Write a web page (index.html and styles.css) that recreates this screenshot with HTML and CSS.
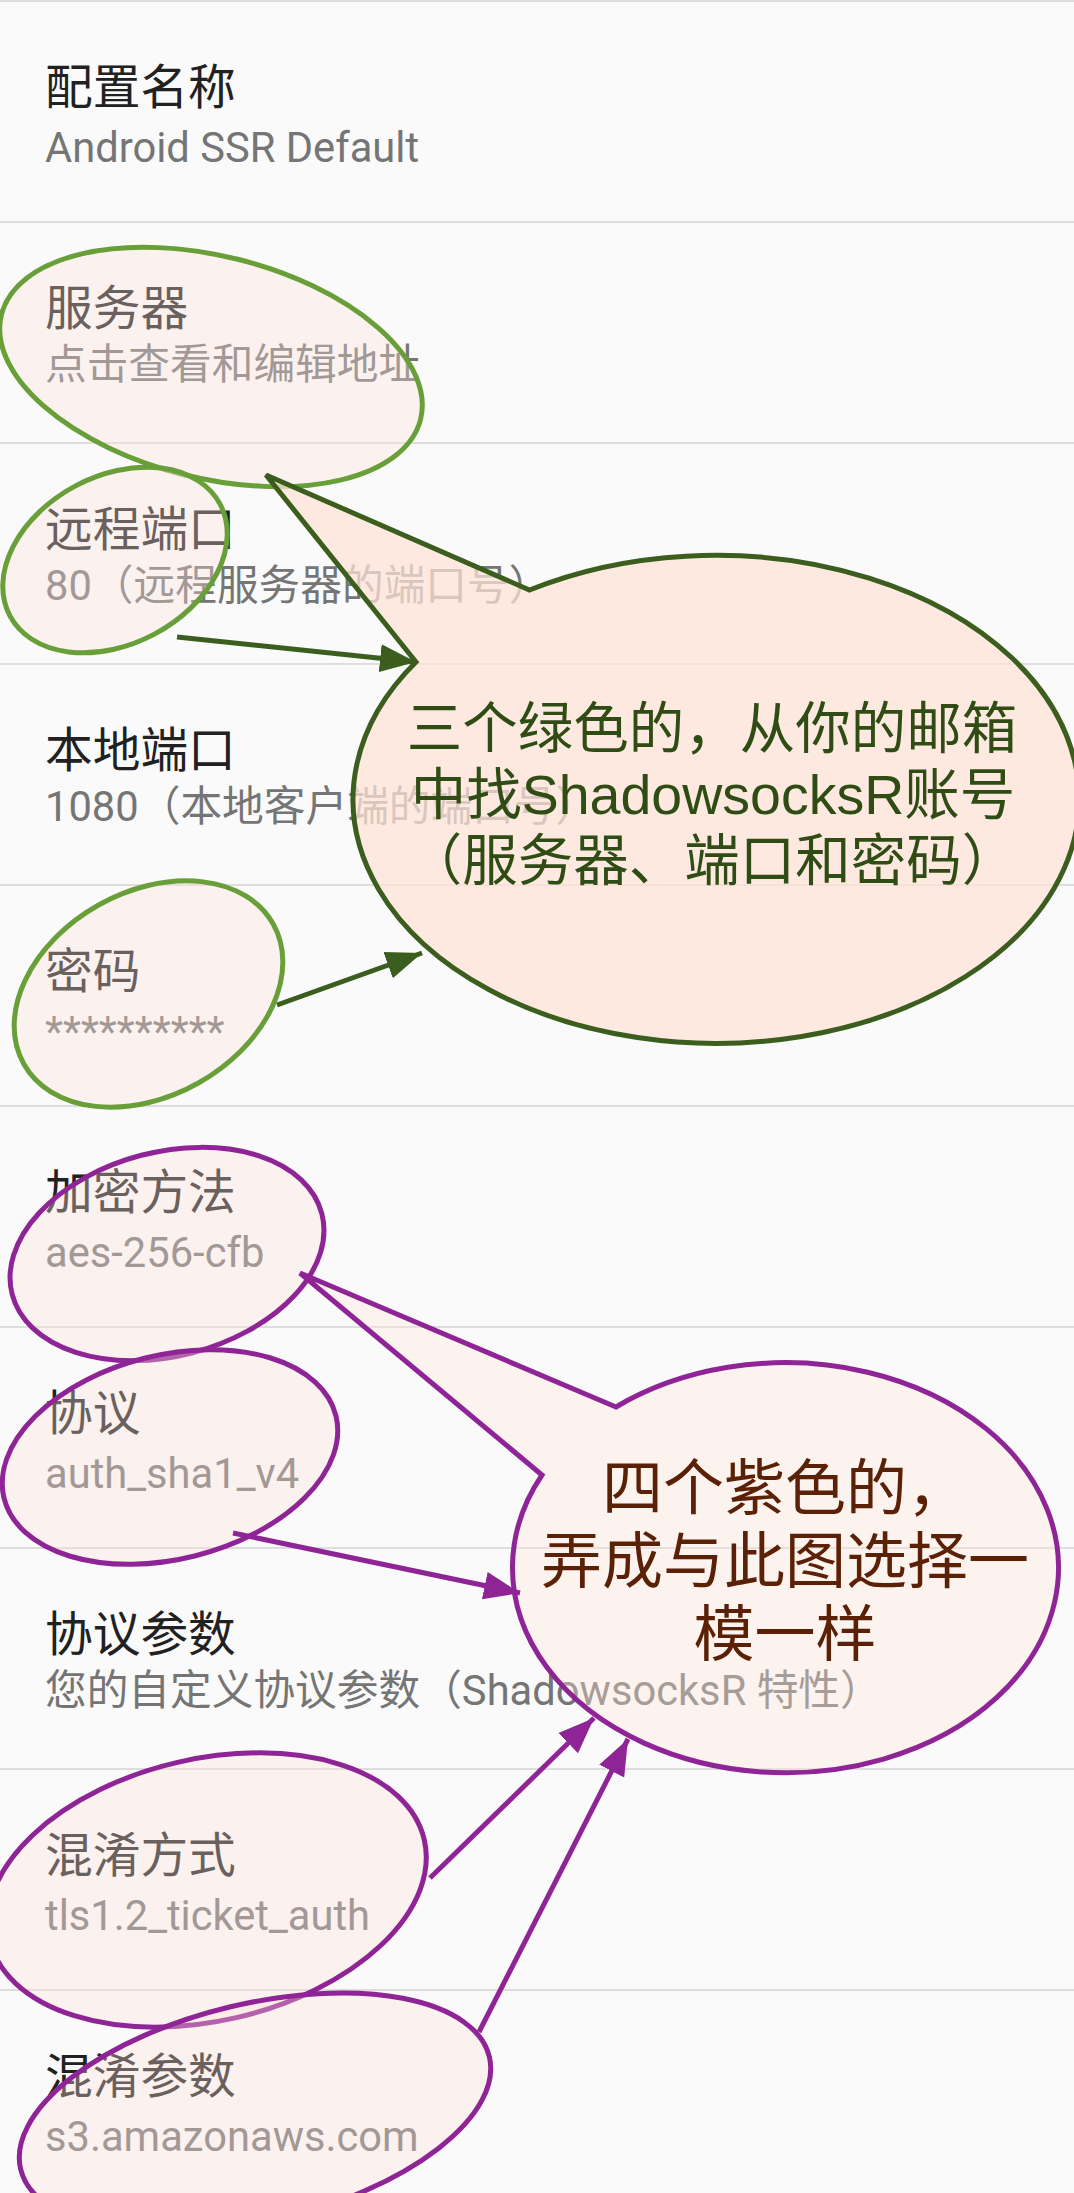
FILE: index.html
```html
<!DOCTYPE html>
<html lang="zh-CN">
<head>
<meta charset="utf-8">
<title>ShadowsocksR 配置</title>
<link rel="stylesheet" href="styles.css">
</head>
<body>
<div class="page">
  <ul class="prefs">
    <li class="pref"><div class="title">配置名称</div><div class="summary">Android SSR Default</div></li>
    <li class="pref"><div class="title">服务器</div><div class="summary cjk">点击查看和编辑地址</div></li>
    <li class="pref"><div class="title">远程端口</div><div class="summary cjk">80（远程服务器的端口号）</div></li>
    <li class="pref"><div class="title">本地端口</div><div class="summary cjk">1080（本地客户端的端口号）</div></li>
    <li class="pref"><div class="title">密码</div><div class="summary">**********</div></li>
    <li class="pref"><div class="title">加密方法</div><div class="summary">aes-256-cfb</div></li>
    <li class="pref"><div class="title">协议</div><div class="summary">auth_sha1_v4</div></li>
    <li class="pref"><div class="title">协议参数</div><div class="summary cjk">您的自定义协议参数（ShadowsocksR 特性）</div></li>
    <li class="pref"><div class="title">混淆方式</div><div class="summary">tls1.2_ticket_auth</div></li>
    <li class="pref"><div class="title">混淆参数</div><div class="summary">s3.amazonaws.com</div></li>
  </ul>

  <svg class="marks" width="1074" height="2193" viewBox="0 0 1074 2193" xmlns="http://www.w3.org/2000/svg">
    <defs>
      <marker id="head-green" markerUnits="userSpaceOnUse" markerWidth="40" markerHeight="30" refX="36" refY="15" orient="auto">
        <path d="M0,1 L36,15 L0,29 Z" class="head-green"/>
      </marker>
      <marker id="head-purple" markerUnits="userSpaceOnUse" markerWidth="40" markerHeight="30" refX="36" refY="15" orient="auto">
        <path d="M0,1 L36,15 L0,29 Z" class="head-purple"/>
      </marker>
    </defs>

    <!-- green group -->
    <ellipse class="ring ring-green" cx="211" cy="367" rx="216" ry="111" transform="rotate(14 211 367)"/>
    <ellipse class="ring ring-green" cx="115" cy="560" rx="119" ry="84" transform="rotate(-28 115 560)"/>
    <ellipse class="ring ring-green" cx="148.5" cy="994" rx="143" ry="102" transform="rotate(-29.3 148.5 994)"/>
    <path class="bubble-green" d="M266 475 L416 662 A363 244 0 1 0 529.5 590 Z"/>
    <line class="arrow-green" x1="177" y1="637" x2="416" y2="662" marker-end="url(#head-green)"/>
    <line class="arrow-green" x1="277" y1="1005" x2="422" y2="953" marker-end="url(#head-green)"/>
    <text class="say-green" x="712" y="748">三个绿色的，从你的邮箱</text>
    <text class="say-green" x="713" y="814">中找ShadowsocksR账号</text>
    <text class="say-green" x="712" y="880">（服务器、端口和密码）</text>

    <!-- purple group -->
    <ellipse class="ring ring-purple" cx="167" cy="1254" rx="160" ry="102" transform="rotate(-14.6 167 1254)"/>
    <ellipse class="ring ring-purple" cx="170" cy="1457" rx="171" ry="102" transform="rotate(-14 170 1457)"/>
    <ellipse class="ring ring-purple" cx="207" cy="1890" rx="223" ry="131" transform="rotate(-13 207 1890)"/>
    <ellipse class="ring ring-purple" cx="255" cy="2113" rx="241" ry="109" transform="rotate(-13.5 255 2113)"/>
    <path class="bubble-purple" d="M300 1273 L616 1407 A273 205 0 1 1 542 1475 Z"/>
    <line class="arrow-purple" x1="233" y1="1533" x2="520" y2="1593" marker-end="url(#head-purple)"/>
    <line class="arrow-purple" x1="430" y1="1878" x2="594" y2="1718" marker-end="url(#head-purple)"/>
    <line class="arrow-purple" x1="479" y1="2032" x2="628" y2="1739" marker-end="url(#head-purple)"/>
    <text class="say-purple" x="785" y="1510">四个紫色的，</text>
    <text class="say-purple" x="785" y="1583">弄成与此图选择一</text>
    <text class="say-purple" x="785" y="1656">模一样</text>
  </svg>
</div>
</body>
</html>
```
FILE: styles.css
```css
html, body {
  margin: 0;
  padding: 0;
  overflow: hidden;
}

body {
  background: #fafafa;
  font-family: Roboto, "Noto Sans CJK SC", sans-serif;
}

.page {
  position: relative;
  width: 1074px;
  height: 2193px;
  overflow: hidden;
}

.prefs {
  list-style: none;
  margin: 0;
  padding: 0;
}

.pref {
  box-sizing: border-box;
  height: 221px;
  border-top: 2px solid #dddddd;
  padding: 52.8px 0 0 45px;
  display: flex;
  flex-direction: column;
}

.title {
  font-family: "Noto Sans CJK SC", sans-serif;
  font-size: 47.7px;
  line-height: 57px;
  color: #212121;
  white-space: nowrap;
}

.summary {
  font-size: 41.7px;
  line-height: 50px;
  margin-top: 10.9px;
  color: #757575;
  white-space: nowrap;
}

.summary.cjk {
  margin-top: 7px;
}

.marks {
  position: absolute;
  left: 0;
  top: 0;
  pointer-events: none;
}

.ring {
  fill: rgba(255, 226, 217, 0.33);
  stroke-width: 5;
}

.ring-green {
  stroke: #689f38;
}

.ring-purple {
  stroke: #8e2496;
}

.bubble-green {
  fill: rgba(254, 226, 214, 0.74);
  stroke: #3b5e1e;
  stroke-width: 5;
  stroke-linejoin: miter;
}

.bubble-purple {
  fill: rgba(255, 226, 217, 0.36);
  stroke: #8e2496;
  stroke-width: 5;
  stroke-linejoin: miter;
}

.arrow-green {
  stroke: #3b5e1e;
  stroke-width: 5;
}

.arrow-purple {
  stroke: #8e2496;
  stroke-width: 5;
}

.head-green {
  fill: #3b5e1e;
}

.head-purple {
  fill: #8e2496;
}

.say-green {
  font-family: "Liberation Sans", "Noto Sans CJK SC", sans-serif;
  font-size: 55.5px;
  fill: #2f4c14;
  text-anchor: middle;
}

.say-purple {
  font-family: "Noto Sans CJK SC", sans-serif;
  font-size: 61px;
  fill: #5b2106;
  text-anchor: middle;
}
```
